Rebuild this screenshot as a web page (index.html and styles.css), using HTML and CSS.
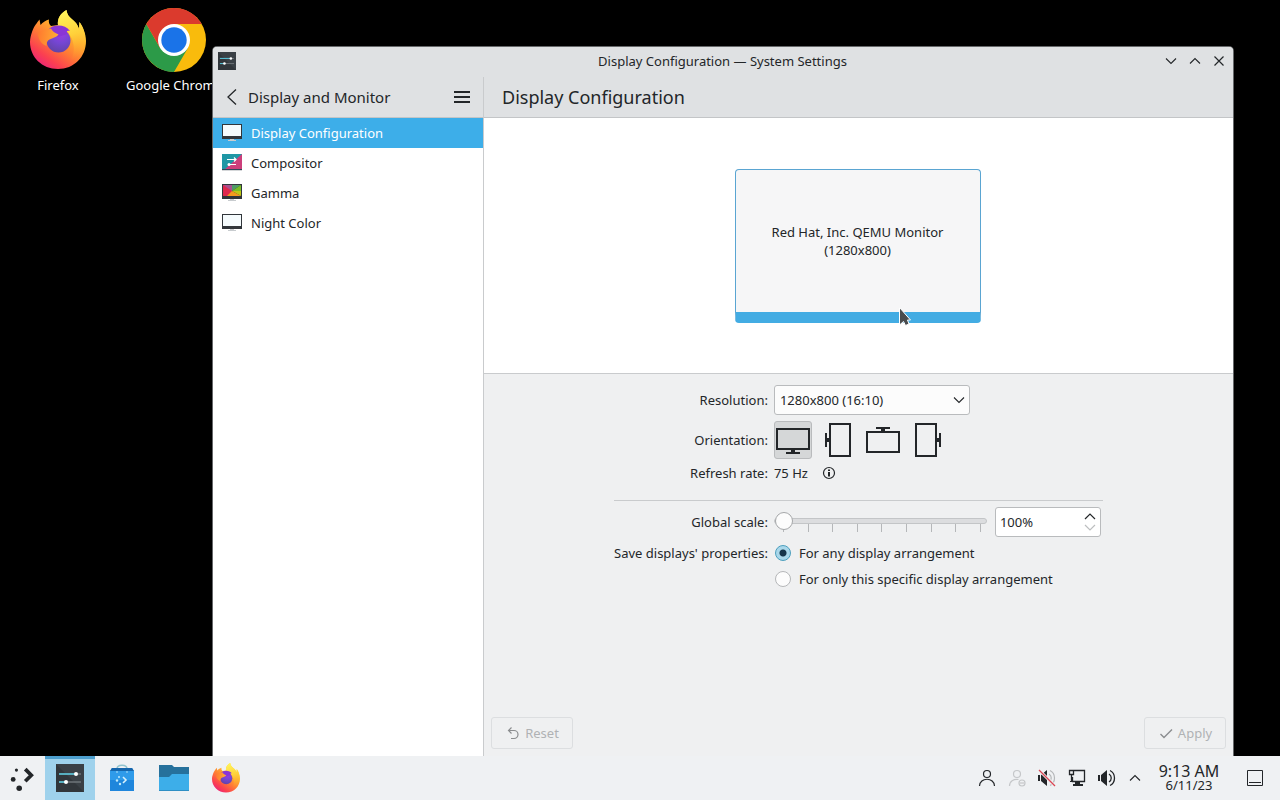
FILE: index.html
```html
<!DOCTYPE html>
<html lang="en">
<head>
    <meta charset="UTF-8">
    <meta name="viewport" content="width=device-width, initial-scale=1.0">
    <title>Display Configuration — System Settings</title>
    <link rel="stylesheet" href="styles.css">
</head>
<body>

    <!-- Shared icons -->
    <svg class="sprite" aria-hidden="true">
        <defs>
            <linearGradient id="ff-body" x1="0.85" y1="0.1" x2="0.25" y2="0.95">
                <stop offset="0" stop-color="#fff04a"/>
                <stop offset="0.3" stop-color="#ffb52c"/>
                <stop offset="0.6" stop-color="#ff7a35"/>
                <stop offset="0.85" stop-color="#fb4050"/>
                <stop offset="1" stop-color="#ee2a70"/>
            </linearGradient>
            <linearGradient id="ff-flame" x1="0.4" y1="0" x2="0.6" y2="1">
                <stop offset="0" stop-color="#fff45a"/>
                <stop offset="0.5" stop-color="#ffd03a"/>
                <stop offset="1" stop-color="#ff9a2e" stop-opacity="0"/>
            </linearGradient>
            <radialGradient id="ff-globe" cx="0.6" cy="0.2" r="0.8">
                <stop offset="0" stop-color="#a03ae0"/>
                <stop offset="0.5" stop-color="#7546d4"/>
                <stop offset="1" stop-color="#6443a8"/>
            </radialGradient>
            <linearGradient id="ff-head" x1="0" y1="0.3" x2="1" y2="0.4">
                <stop offset="0" stop-color="#ff7a2f"/>
                <stop offset="1" stop-color="#ffae34"/>
            </linearGradient>
        </defs>
        <symbol id="firefox" viewBox="-1 0 62 64">
            <path fill="url(#ff-body)" d="M4 24C6 18 9 15 11.500 11.500L12.500 17C15 14 18 12.500 21 11.500C20.500 14 21 16 23 18L30 17C29 10 33 5 38.500 2C39 8 43 10 47 14C49 16 50 18 51 21L51.500 14C55 19 58 26 58 33C58 49 46 61 30 61C14 61 2 49 2 34C2 30 3 27 4 24Z"/>
            <path fill="url(#ff-flame)" d="M30 18C29 10 33 5 38.500 2C39 8 43 10 47 14C49 16 50 18 51 21L51.500 14C55 19 58 26 57 34C56 43 50 50 43 52C49 42 45 27 37 22Z"/>
            <circle fill="url(#ff-globe)" cx="30.500" cy="32.500" r="12"/>
            <path fill="#8a35d6" d="M20 22C25 16 37 16 42 23C39 22 38 23 39.500 26L30 29Z"/>
            <path fill="url(#ff-head)" d="M10 25C14 21 19 22 23 20.500C24 23 27 25 30.500 26.500C29 29 26 29.500 24 30.500C20.500 31.500 18.500 33 18.500 38C13 36 10 31 10 25Z"/>
        </symbol>
        <symbol id="settings" viewBox="0 0 28 28">
            <rect width="28" height="28" fill="#31363b"/>
            <path d="M0 0h28v28z" fill="#3a4046"/>
            <path d="M3 10h22M3 18h22" stroke="#6d7479" stroke-width="1.500"/>
            <path d="M3 10h16M3 18h6" stroke="#55c6dc" stroke-width="1.500"/>
            <circle cx="20" cy="10" r="2" fill="#fff"/>
            <circle cx="10" cy="18" r="2" fill="#fff"/>
        </symbol>
        <symbol id="screen" viewBox="0 0 22 22">
            <path fill="#31363b" d="M1 2h20v15H1z"/>
            <path fill="#f5fbfd" d="M2 3h18v11H2z"/>
            <path fill="#c8cccf" d="M9 17h4v1h2v1H7v-1h2z"/>
        </symbol>
        <symbol id="monitor" viewBox="0 0 36 36">
            <path fill="none" stroke="#232629" stroke-width="2" d="M2 7h32v20H2z"/>
            <path fill="#232629" d="M16 28h4v2h5v2H11v-2h5z"/>
        </symbol>
        <symbol id="down" viewBox="0 0 16 16">
            <path fill="none" stroke="#232629" stroke-width="1.100" d="M3 5.500l5 5 5-5"/>
        </symbol>
        <symbol id="up" viewBox="0 0 16 16">
            <path fill="none" stroke="#232629" stroke-width="1.100" d="M3 10.500l5-5 5 5"/>
        </symbol>
    </svg>

    <main class="desktop">
        <div class="shortcuts">
            <a class="shortcut" href="#">
                <svg class="shortcut-icon"><use href="#firefox"/></svg>
                <span>Firefox</span>
            </a>
            <a class="shortcut" href="#">
                <svg class="shortcut-icon" viewBox="0 0 64 64">
                    <circle cx="32" cy="32" r="32" fill="#f9bb0c"/>
                    <path fill="#2c9a48" d="M4.300 16A32 32 0 0 0 32 64L45.900 40 18.100 40z"/>
                    <path fill="#db3a2d" d="M4.300 16A32 32 0 0 1 59.700 16L32 16 18.100 40z"/>
                    <circle cx="32" cy="32" r="16" fill="#fff"/>
                    <circle cx="32" cy="32" r="12.700" fill="#1a73e8"/>
                </svg>
                <span>Google Chrome</span>
            </a>
        </div>

        <section class="window">
            <header class="titlebar">
                <svg class="app-icon"><use href="#settings"/></svg>
                <span class="window-title">Display Configuration — System Settings</span>
                <div class="window-buttons">
                    <button aria-label="Minimize"><svg class="icon16"><use href="#down"/></svg></button>
                    <button aria-label="Maximize"><svg class="icon16"><use href="#up"/></svg></button>
                    <button aria-label="Close"><svg class="icon16" viewBox="0 0 16 16"><path fill="none" stroke="#232629" stroke-width="1.200" d="M3.500 3.500l9 9M12.500 3.500l-9 9"/></svg></button>
                </div>
            </header>

            <div class="window-body">
                <nav class="sidebar">
                    <div class="sidebar-header">
                        <button class="back" aria-label="Back"><svg class="back-icon" viewBox="0 0 16 20"><path fill="none" stroke="#232629" stroke-width="1.300" d="M12 2.500L4 10l8 7.500"/></svg></button>
                        <span class="sidebar-title">Display and Monitor</span>
                        <button class="menu" aria-label="Menu"><svg class="icon16" viewBox="0 0 16 16"><path stroke="#232629" stroke-width="2" d="M0 3h16M0 8h16M0 13h16"/></svg></button>
                    </div>
                    <a class="item selected" href="#"><svg class="item-icon"><use href="#screen"/></svg>Display Configuration</a>
                    <a class="item" href="#">
                        <svg class="item-icon" viewBox="0 0 22 22">
                            <path fill="#1f97a5" d="M1 2h20v16H1z"/>
                            <path fill="#cc3f7b" d="M21 2v16H3z"/>
                            <path fill="#31475a" d="M1 17h20v1H1z"/>
                            <path fill="none" stroke="#fff" stroke-width="1.200" d="M6 7.500h9M8 12.500h7M13 5.500l2 2-2 2"/>
                            <circle cx="8" cy="12.500" r="1.500" fill="#fff"/>
                            <path fill="#d5d7d9" d="M1 18h20v1H1z"/>
                        </svg>Compositor
                    </a>
                    <a class="item" href="#">
                        <svg class="item-icon" viewBox="0 0 22 22">
                            <path fill="#31363b" d="M1 2h20v15H1z"/>
                            <path fill="#e0284e" d="M2 3h9v11H2z"/>
                            <path fill="#a8508e" d="M2 3h9v6z"/>
                            <path fill="#4f9a68" d="M11 3h9L11 9z"/>
                            <path fill="#7bbf26" d="M20 3v7l-9-1z"/>
                            <path fill="#c0c816" d="M20 9v5l-9-5z"/>
                            <path fill="#f39a1f" d="M11 9l9 5H6z"/>
                            <path fill="#c8cccf" d="M9 17h4v1h2v1H7v-1h2z"/>
                        </svg>Gamma
                    </a>
                    <a class="item" href="#"><svg class="item-icon"><use href="#screen"/></svg>Night Color</a>
                </nav>

                <div class="page">
                    <h1 class="page-title">Display Configuration</h1>

                    <div class="screens">
                        <div class="output">
                            <span>Red Hat, Inc. QEMU Monitor</span>
                            <span>(1280x800)</span>
                            <svg class="pointer" viewBox="0 0 14 22"><path fill="#4a4c4e" stroke="#fff" stroke-width="1" d="M1.500 1.500v17.500l4-3.500 2 4 3.500-1.500-1.500-4h3z"/></svg>
                        </div>
                    </div>

                    <form class="settings">
                        <label for="resolution">Resolution:</label>
                        <div class="combo">
                            <select id="resolution"><option>1280x800 (16:10)</option></select>
                            <svg class="icon16 combo-arrow"><use href="#down"/></svg>
                        </div>

                        <span class="label">Orientation:</span>
                        <div class="orientations">
                            <button type="button" class="rotate checked" aria-label="No rotation"><svg class="icon36"><use href="#monitor"/></svg></button>
                            <button type="button" class="rotate" aria-label="90° clockwise"><svg class="icon36" viewBox="0 0 36 36"><path fill="none" stroke="#232629" stroke-width="2" d="M10 2h20v32H10z"/><path fill="#232629" d="M9 16H7v-5H5v14h2v-5h2z"/></svg></button>
                            <button type="button" class="rotate" aria-label="Upside down"><svg class="icon36" viewBox="0 0 36 36"><path fill="none" stroke="#232629" stroke-width="2" d="M2 10h32v20H2z"/><path fill="#232629" d="M16 9V7h-5V5h14v2h-5v2z"/></svg></button>
                            <button type="button" class="rotate" aria-label="90° counterclockwise"><svg class="icon36" viewBox="0 0 36 36"><path fill="none" stroke="#232629" stroke-width="2" d="M6 2h20v32H6z"/><path fill="#232629" d="M27 16h2v-5h2v14h-2v-5h-2z"/></svg></button>
                        </div>

                        <span class="label">Refresh rate:</span>
                        <div class="refresh">
                            <span>75 Hz</span>
                            <svg class="icon16" viewBox="0 0 16 16"><circle cx="8" cy="8" r="5.500" fill="none" stroke="#232629" stroke-width="1.200"/><path fill="#232629" d="M7 4.500h2v1.500H7zM7 7h2v4.500H7z"/></svg>
                        </div>

                        <hr class="separator">

                        <label for="scale">Global scale:</label>
                        <div class="scale">
                            <div class="slider">
                                <input type="range" id="scale" min="100" max="300" step="25" value="100">
                                <div class="ticks"><i></i><i></i><i></i><i></i><i></i><i></i><i></i><i></i><i></i></div>
                            </div>
                            <div class="spinbox">
                                <input type="text" value="100%" aria-label="Scale percent">
                                <div class="steps">
                                    <button type="button" aria-label="Increase"><svg class="step-icon" viewBox="0 0 16 11"><path fill="none" stroke="#232629" stroke-width="1.200" d="M3 8l5-5 5 5"/></svg></button>
                                    <button type="button" aria-label="Decrease" disabled><svg class="step-icon" viewBox="0 0 16 11"><path fill="none" stroke="#bcbebf" stroke-width="1.200" d="M3 3l5 5 5-5"/></svg></button>
                                </div>
                            </div>
                        </div>

                        <span class="label">Save displays' properties:</span>
                        <label class="choice"><input type="radio" name="save" checked>For any display arrangement</label>
                        <label class="choice second"><input type="radio" name="save">For only this specific display arrangement</label>
                    </form>

                    <footer class="actions">
                        <button class="action" disabled><svg class="icon16" viewBox="0 0 16 16"><path fill="none" stroke="#8b8d8f" stroke-width="1.200" d="M6.500 2.500l-3 3 3 3M3.500 5.500H9a4 4 0 0 1 0 8H6"/></svg>Reset</button>
                        <button class="action" disabled><svg class="icon16" viewBox="0 0 16 16"><path fill="none" stroke="#8b8d8f" stroke-width="1.400" d="M2.500 9l3.500 3.500 8-8"/></svg>Apply</button>
                    </footer>
                </div>
            </div>
        </section>
    </main>

    <footer class="panel">
        <button class="launcher" aria-label="Application Launcher">
            <svg class="launcher-icon" viewBox="0 0 28 28"><circle cx="8" cy="5.500" r="1.700"/><circle cx="4.500" cy="15.500" r="2.600"/><circle cx="11" cy="25" r="3"/><path fill="none" stroke="#232629" stroke-width="4" d="M17.500 4.500l6.500 6.500-6.500 6.500"/></svg>
        </button>
        <button class="task active" aria-label="System Settings"><svg class="task-icon"><use href="#settings"/></svg></button>
        <button class="task" aria-label="Discover">
            <svg class="task-icon" viewBox="0 0 28 28">
                <path fill="none" stroke="#8fc3cf" stroke-width="1.500" d="M9 5c0-5 10-5 10 0"/>
                <path fill="#1f86dc" d="M2 7l2-3h20l2 3v20H2z"/>
                <path fill="#2f9bea" d="M2 7h24v9H2z"/>
                <path fill="#1666ac" d="M2 7l2-3h20l2 3z"/>
                <path fill="none" stroke="#d8f1fc" stroke-width="1.600" d="M15 13l3 3-3 3"/>
                <g fill="#bfe9fa"><circle cx="11" cy="13" r="1"/><circle cx="9" cy="16.500" r="1.200"/><circle cx="12" cy="20" r="1.200"/><circle cx="9" cy="8" r="0.800"/><circle cx="19" cy="8" r="0.800"/></g>
            </svg>
        </button>
        <button class="task" aria-label="Files">
            <svg class="folder-icon" viewBox="0 0 30 28">
                <path fill="#26719c" d="M0 1h13l2 2h15v12H0z"/>
                <path fill="#3daee9" d="M0 13h10l3-3h17v17H0z"/>
                <path fill="#2f8fc4" d="M0 26h30v1H0z"/>
            </svg>
        </button>
        <button class="task" aria-label="Firefox"><svg class="browser-icon"><use href="#firefox"/></svg></button>

        <div class="tray">
            <button aria-label="User"><svg class="tray-icon" viewBox="0 0 22 22"><g fill="none" stroke="#232629" stroke-width="1.200"><circle cx="11" cy="7" r="3.500"/><path d="M3.500 19c0-9 15-9 15 0"/></g></svg></button>
            <button aria-label="Offline contacts"><svg class="tray-icon" viewBox="0 0 22 22"><g fill="none" stroke="#c5c7c9" stroke-width="1.200"><circle cx="11" cy="7" r="3.500"/><path d="M3.500 19c0-5 4-7 9-6.500"/><circle cx="16" cy="16" r="3"/><path d="M14 16h4"/></g></svg></button>
            <button aria-label="Muted">
                <svg class="tray-icon" viewBox="0 0 22 22"><path fill="#232629" d="M2 8h2v6H2zM5 8l6-5v16l-6-5z"/><path fill="none" stroke="#b5b7b9" stroke-width="1.200" d="M13 7c3 2 3 6 0 8M14 3.500c6 3 6 12 0 15"/><path stroke="#eff0f1" stroke-width="3" d="M3 3l16 16"/><path stroke="#da4453" stroke-width="1.300" d="M3 3l16 16"/></svg>
            </button>
            <button aria-label="Network"><svg class="tray-icon" viewBox="0 0 22 22"><g fill="none" stroke="#232629" stroke-width="1.300"><path d="M8 3.500h10.500v11H6.500V10M3.500 3.500h4v4h-4zM5.500 8v6.500"/></g><path fill="#232629" d="M4 14h14v1H4zM9 15h5v2h3v2H7v-2h2z"/></svg></button>
            <button aria-label="Volume"><svg class="tray-icon" viewBox="0 0 22 22"><path fill="#232629" d="M2 8h2v6H2zM5 8l6-5v16l-6-5z"/><path fill="none" stroke="#232629" stroke-width="1.300" d="M13 7c3 2 3 6 0 8M14 3.500c6 3 6 12 0 15"/></svg></button>
            <button aria-label="Show hidden icons"><svg class="icon16"><use href="#up"/></svg></button>
        </div>
        <div class="clock">
            <span class="time">9:13 AM</span>
            <span class="date">6/11/23</span>
        </div>
        <button class="show-desktop" aria-label="Show Desktop"><svg class="icon16" viewBox="0 0 16 16"><path fill="none" stroke="#232629" d="M0.500 0.500h15v15H0.500zM2 12.500h12"/></svg></button>
    </footer>

</body>
</html>
```
FILE: styles.css
```css
* {
    box-sizing: border-box;
}
body {
    margin: 0;
    height: 100vh;
    display: flex;
    flex-direction: column;
    background-color: #000;
    color: #232629;
    font-family: "Noto Sans", sans-serif;
    font-size: 13px;
    line-height: 18px;
    overflow: hidden;
}
button, input, select {
    font: inherit;
    color: inherit;
}
button {
    display: flex;
    align-items: center;
    justify-content: center;
    padding: 0;
    border: none;
    background: none;
}
a {
    color: inherit;
    text-decoration: none;
}
svg {
    display: block;
    flex: none;
}
.sprite {
    position: absolute;
    width: 0;
    height: 0;
}
.icon16 {
    width: 16px;
    height: 16px;
}

/* Desktop */
.desktop {
    position: relative;
    flex: 1;
    min-height: 0;
    overflow: hidden;
}
.shortcuts {
    display: flex;
    padding-top: 8px;
}
.shortcut {
    display: flex;
    flex-direction: column;
    align-items: center;
    gap: 4px;
    width: 116px;
    color: #fff;
}
.shortcut-icon {
    width: 64px;
    height: 64px;
}

/* Window */
.window {
    position: absolute;
    top: 47px;
    right: 47px;
    bottom: 0;
    left: 213px;
    display: flex;
    flex-direction: column;
    background-color: #eff0f1;
    border-radius: 4px 4px 0 0;
    box-shadow: 0 0 0 1px #66686a;
    overflow: hidden;
}
.titlebar {
    display: grid;
    grid-template-columns: 1fr auto 1fr;
    align-items: center;
    height: 30px;
    padding: 0 6px 2px 5px;
    background-color: #dfe1e3;
}
.app-icon {
    width: 18px;
    height: 18px;
}
.window-buttons {
    display: flex;
    justify-content: flex-end;
    gap: 8px;
}
.window-body {
    flex: 1;
    display: flex;
    min-height: 0;
}

/* Sidebar */
.sidebar {
    width: 271px;
    background-color: #fff;
    border-right: 1px solid #c9cbcd;
}
.sidebar-header {
    display: flex;
    align-items: center;
    height: 41px;
    padding: 0 13px 0 11px;
    background-color: #dfe1e3;
    border-bottom: 1px solid #c3c5c7;
}
.back-icon {
    width: 16px;
    height: 20px;
}
.sidebar-title {
    flex: 1;
    margin-left: 8px;
    font-size: 15px;
}
.item {
    display: flex;
    align-items: center;
    gap: 8px;
    height: 30px;
    padding: 0 8px;
}
.item.selected {
    background-color: #3daee9;
    color: #fff;
}
.item-icon {
    width: 22px;
    height: 22px;
}

/* Page */
.page {
    flex: 1;
    display: flex;
    flex-direction: column;
    min-width: 0;
}
.page-title {
    height: 41px;
    margin: 0;
    padding-left: 18px;
    background-color: #dfe1e3;
    border-bottom: 1px solid #c3c5c7;
    font-size: 18px;
    font-weight: normal;
    line-height: 40px;
}
.screens {
    display: flex;
    align-items: center;
    justify-content: center;
    height: 256px;
    padding-right: 2px;
    background-color: #fff;
    border-bottom: 1px solid #c9cbcd;
}
.output {
    position: relative;
    display: flex;
    flex-direction: column;
    align-items: center;
    justify-content: center;
    width: 246px;
    height: 154px;
    background-color: #f6f6f7;
    border: 1px solid #5aa5d2;
    border-bottom: 11px solid #43ace3;
    border-radius: 4px;
}
.pointer {
    position: absolute;
    left: 162px;
    bottom: -16px;
    width: 14px;
    height: 22px;
}

/* Settings form */
.settings {
    flex: 1;
    display: grid;
    grid-template-columns: max-content 329px;
    align-content: start;
    align-items: center;
    justify-content: center;
    gap: 6px;
    padding-top: 11px;
    line-height: 16px;
}
.settings > label:not(.choice), .label {
    text-align: right;
}
.combo {
    position: relative;
    width: 196px;
}
.combo select {
    display: block;
    width: 100%;
    height: 30px;
    padding: 0 5px;
    appearance: none;
    background-color: #fcfcfc;
    border: 1px solid #b9bbbd;
    border-radius: 3px;
}
.combo-arrow {
    position: absolute;
    top: 7px;
    right: 3px;
    pointer-events: none;
}
.orientations {
    display: flex;
    gap: 7px;
}
.rotate {
    width: 38px;
    height: 38px;
    border: 1px solid transparent;
    border-radius: 3px;
}
.rotate.checked {
    background-color: #d5d7d8;
    border-color: #b9bbbd;
}
.icon36 {
    width: 36px;
    height: 36px;
}
.refresh {
    display: flex;
    align-items: center;
    gap: 13px;
}
.separator {
    grid-column: 1 / -1;
    width: 100%;
    margin: 13px 0 0;
    border: none;
    border-top: 1px solid #c9cbcd;
}
.scale {
    display: flex;
    align-items: center;
    gap: 8px;
}
.slider {
    width: 213px;
}
.slider input {
    position: relative;
    z-index: 1;
    display: block;
    width: 100%;
    height: 18px;
    margin: 0;
    appearance: none;
    background: none;
}
.slider input::-webkit-slider-runnable-track {
    height: 6px;
    background-color: #dcdddf;
    border: 1px solid #c3c5c7;
    border-radius: 3px;
}
.slider input::-webkit-slider-thumb {
    appearance: none;
    width: 18px;
    height: 18px;
    margin-top: -7px;
    background-color: #fcfcfc;
    border: 1px solid #a5a7a9;
    border-radius: 50%;
}
.ticks {
    display: flex;
    justify-content: space-between;
    height: 8px;
    margin: -6px 6px 0 9px;
}
.ticks i {
    width: 1px;
    background-color: #b5b7b9;
}
.spinbox {
    display: flex;
    width: 106px;
    height: 30px;
    background-color: #fff;
    border: 1px solid #b9bbbd;
    border-radius: 3px;
}
.spinbox input {
    flex: 1;
    min-width: 0;
    padding: 0 4px;
    background: none;
    border: none;
}
.steps {
    display: flex;
    flex-direction: column;
    justify-content: center;
    padding-right: 2px;
}
.step-icon {
    width: 16px;
    height: 11px;
}
.choice {
    display: flex;
    align-items: center;
    gap: 8px;
    height: 20px;
    padding-left: 1px;
}
.choice.second {
    grid-column: 2;
}
.choice input {
    width: 16px;
    height: 16px;
    margin: 0;
    appearance: none;
    background-color: #fcfcfc;
    border: 1px solid #b5b7b9;
    border-radius: 50%;
}
.choice input:checked {
    background: radial-gradient(circle, #16354a 3px, #a9d7ea 4px);
    border-color: #4b9fbe;
}
.actions {
    display: flex;
    justify-content: space-between;
    padding: 7px;
}
.action {
    gap: 4px;
    width: 82px;
    height: 32px;
    border: 1px solid #dcdee0;
    border-radius: 3px;
    color: #b0b2b4;
}

/* Panel */
.panel {
    display: flex;
    align-items: center;
    gap: 2px;
    height: 44px;
    background-color: #eff1f3;
}
.launcher {
    width: 43px;
    height: 44px;
}
.launcher-icon {
    width: 26px;
    height: 26px;
    fill: #232629;
}
.task {
    width: 50px;
    height: 44px;
}
.task.active {
    background-color: #9fd2ec;
    box-shadow: inset 0 3px #4d9fce;
}
.task-icon {
    width: 28px;
    height: 28px;
}
.folder-icon {
    width: 30px;
    height: 28px;
}
.browser-icon {
    width: 32px;
    height: 32px;
}
.tray {
    display: flex;
    margin-left: auto;
}
.tray button {
    width: 30px;
    height: 44px;
}
.tray button:last-child {
    width: 26px;
}
.tray-icon {
    width: 22px;
    height: 22px;
}
.clock {
    display: flex;
    flex-direction: column;
    align-items: center;
    width: 78px;
}
.time {
    font-size: 16px;
    line-height: 15px;
}
.date {
    line-height: 13px;
}
.show-desktop {
    width: 50px;
    height: 44px;
}
```
